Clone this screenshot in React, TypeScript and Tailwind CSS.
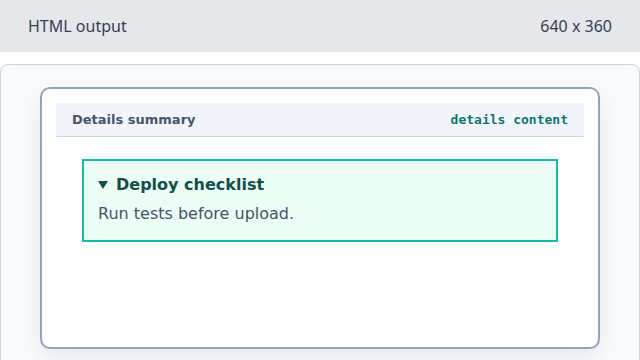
export default function App() {
  return (
    <div className="w-[640px] h-[360px] overflow-hidden bg-white" style={{ fontFamily: '"DejaVu Sans", sans-serif' }}>
      <div className="h-[52px] bg-[#e5e7eb] flex items-center justify-between px-[28px] text-[16px] text-[#374151]" style={{ fontFamily: '"Noto Sans", sans-serif' }}>
        <span>HTML output</span>
        <span>640 x 360</span>
      </div>
      <div className="mt-[12px] h-[320px] border border-[#cbd5e1] rounded-lg bg-[#f8fafc] pt-[22px]">
        <div className="mx-auto w-[560px] h-[262px] border-2 border-[#94a3b8] rounded-[10px] bg-white p-[14px] shadow-[0_8px_24px_rgba(15,23,42,0.08)]">
          <div className="h-[34px] bg-[#f1f5f9] border-b border-[#cbd5e1] flex items-center justify-between px-[16px]">
            <span className="text-[13px] font-bold text-[#475569]">Details summary</span>
            <span className="text-[13px] font-bold text-[#0f766e]" style={{ fontFamily: '"DejaVu Sans Mono", monospace' }}>details content</span>
          </div>
          <div className="mx-[26px] mt-[22px] h-[83px] border-2 border-[#14b8a6] bg-[#ecfdf5] px-[14px] pt-[13px]">
            <div className="flex items-center text-[16px] font-bold text-[#134e4a] leading-[22px]">
              <svg width="10" height="10" viewBox="0 0 10 10" className="mr-[8px]">
                <path d="M0 1 L10 1 L5 9 Z" fill="#134e4a" />
              </svg>
              <span>Deploy checklist</span>
            </div>
            <div className="mt-[7px] text-[16px] text-[#475569] leading-[22px]">Run tests before upload.</div>
          </div>
        </div>
      </div>
    </div>
  );
}
